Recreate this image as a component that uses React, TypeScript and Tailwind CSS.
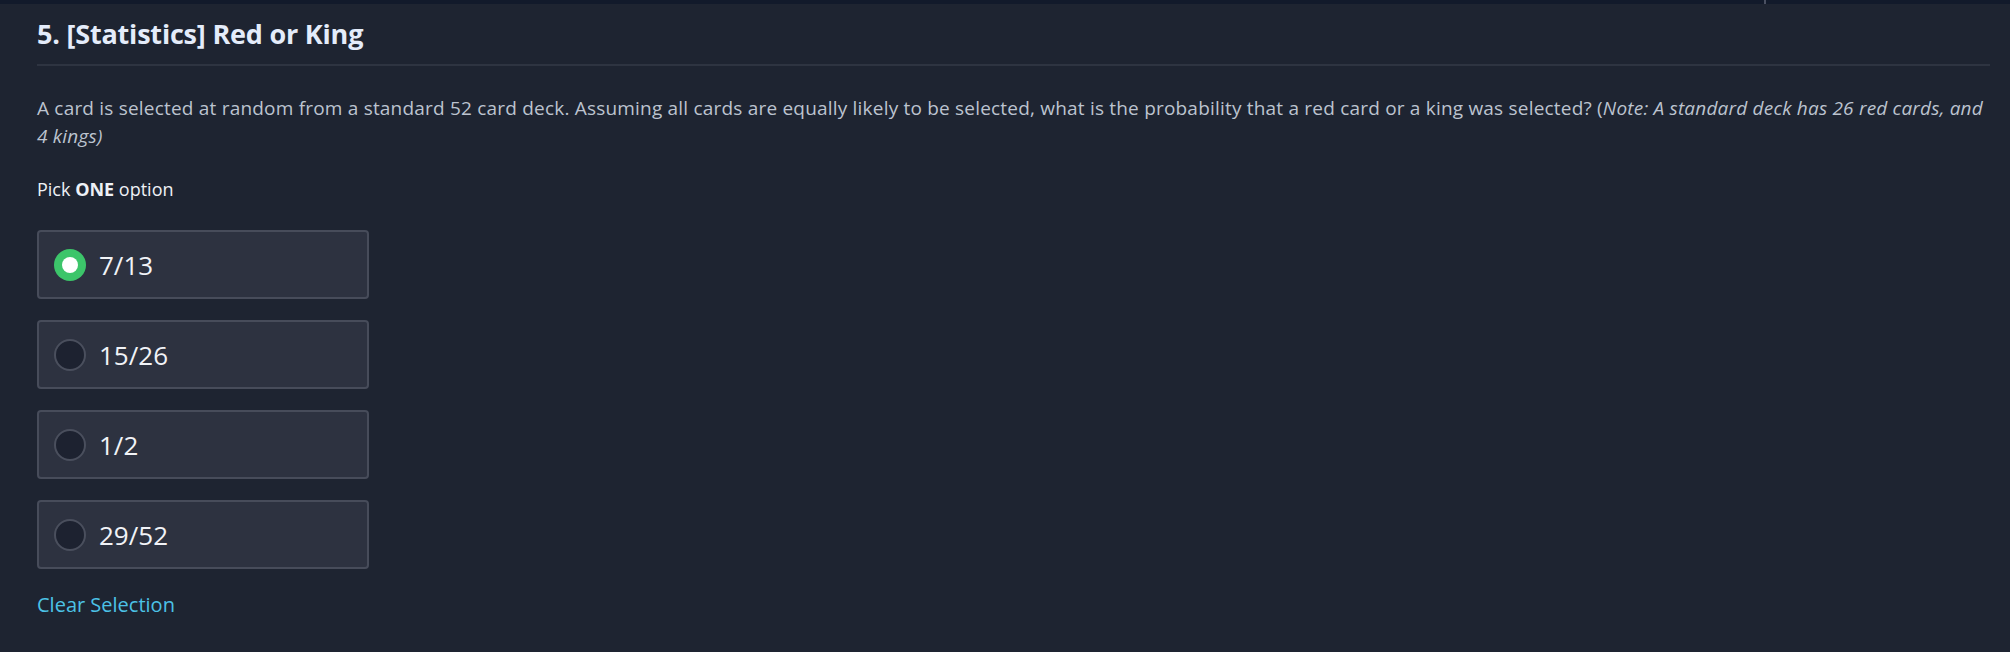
import { useState } from 'react';

const options = ['7/13', '15/26', '1/2', '29/52'];

export default function App() {
    const [selected, setSelected] = useState<number | null>(0);

    return (
        <div className="min-h-[652px] w-full bg-[#1e2431] font-['Open_Sans',sans-serif]">
            {/* top bar */}
            <div className="h-[4px] w-full bg-[#121a2b] flex">
                <div className="ml-[1764px] w-[2px] h-full bg-[#4a5061]" />
            </div>

            <div className="pl-[37px] pr-[20px] pt-[12px]">
                <h1 className="text-[27px] leading-[36px] font-bold text-[#e4ecfa] tracking-[-0.2px] pb-[12px] border-b-2 border-[#2e3441]">
                    5. [Statistics] Red or King
                </h1>

                <p className="mt-[28px] text-[19px] leading-[28px] text-[#bcc3cf] tracking-[0.2px]">
                    A card is selected at random from a standard 52 card deck. Assuming all cards are equally likely to be selected, what is the probability that a red card or a king was selected? (<em className="italic font-normal">Note: A standard deck has 26 red cards, and 4 kings)</em>
                </p>

                <p className="mt-[27px] text-[18px] leading-[24px] text-[#eef1f6]">
                    Pick <span className="font-bold">ONE</span> option
                </p>

                <div className="mt-[29px] flex flex-col gap-[21px]">
                    {options.map((opt, i) => (
                        <button
                            key={opt}
                            onClick={() => setSelected(i)}
                            className="w-[332px] h-[69px] flex items-center pl-[15px] gap-[13px] rounded-[4px] border-2 border-[#474c5a] bg-[#2d3240] text-left"
                        >
                            {selected === i ? (
                                <span className="w-[32px] h-[32px] rounded-full bg-[#3cc56a] flex items-center justify-center">
                                    <span className="w-[16px] h-[16px] rounded-full bg-white" />
                                </span>
                            ) : (
                                <span className="w-[32px] h-[32px] rounded-full bg-[#1d2230] border-2 border-[#4a4f5d]" />
                            )}
                            <span className="text-[26px] leading-[32px] text-[#f1f3f7]">{opt}</span>
                        </button>
                    ))}
                </div>

                <button
                    onClick={() => setSelected(null)}
                    className="mt-[22px] text-[20px] leading-[28px] text-[#4cc2e6]"
                >
                    Clear Selection
                </button>
            </div>
        </div>
    );
}
